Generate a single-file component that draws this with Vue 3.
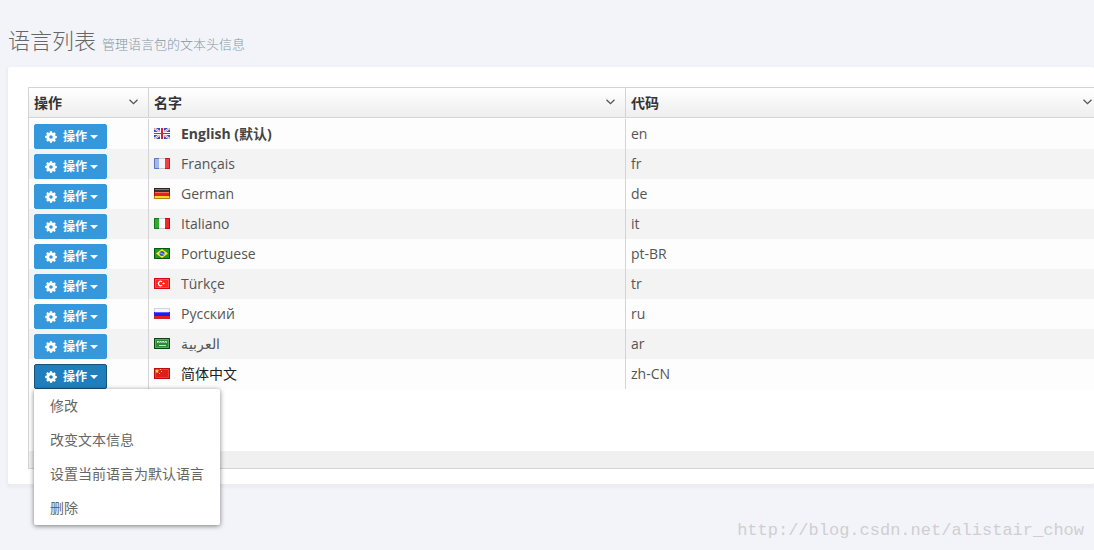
<script setup>
import { ref } from 'vue'

const columns = ['操作', '名字', '代码']
const languages = [
  { flag: 'gb', name: 'English', code: 'en', isDefault: true },
  { flag: 'fr', name: 'Français', code: 'fr' },
  { flag: 'de', name: 'German', code: 'de' },
  { flag: 'it', name: 'Italiano', code: 'it' },
  { flag: 'br', name: 'Portuguese', code: 'pt-BR' },
  { flag: 'tr', name: 'Türkçe', code: 'tr' },
  { flag: 'ru', name: 'Русский', code: 'ru' },
  { flag: 'sa', name: 'العربية', code: 'ar' },
  { flag: 'cn', name: '简体中文', code: 'zh-CN', dark: true },
]
const actions = ['修改', '改变文本信息', '设置当前语言为默认语言', '删除']
const openCode = ref('zh-CN')
function toggle(code) {
  openCode.value = openCode.value === code ? '' : code
}
</script>

<template>
  <main class="page">
    <header class="page-head">
      <h1>语言列表</h1>
      <small>管理语言包的文本头信息</small>
    </header>

    <section class="card">
      <div class="grid">
        <table>
          <thead>
            <tr>
              <th v-for="(c, i) in columns" :key="c" :class="{ narrow: i === 0 }" scope="col">
                <div class="th-inner">
                  <span>{{ c }}</span>
                  <button class="col-menu" type="button" :aria-label="c">
                    <svg width="9" height="6" viewBox="0 0 9 6"><path d="M.5.8 4.500 4.600 8.500.8" fill="none" stroke="#555" stroke-width="1.300" /></svg>
                  </button>
                </div>
              </th>
            </tr>
          </thead>
          <tbody>
            <tr v-for="l in languages" :key="l.code">
              <td class="action-cell">
                <button class="btn" :class="{ open: openCode === l.code }" type="button" :aria-expanded="openCode === l.code" @click="toggle(l.code)">
                  <svg class="gear" width="12" height="12" viewBox="0 0 12 12">
                    <path fill="#fff" fill-rule="evenodd" d="M5 .3h2l.3 1.400.9.4L9.400 1.300l1.400 1.400-.8 1.200.4.9 1.400.3v2l-1.400.3-.4.9.8 1.200-1.400 1.400-1.200-.8-.9.4L7 11.700H5l-.3-1.400-.9-.4-1.200.8L1.200 9.300l.8-1.200-.4-.9L.200 6.900v-2l1.400-.3.4-.9-.8-1.200 1.400-1.400 1.200.8.9-.4zM6 4.200a1.800 1.800 0 1 0 0 3.600 1.800 1.800 0 0 0 0-3.600z" />
                  </svg>
                  <span>操作</span>
                  <i class="caret"></i>
                </button>
                <ul v-if="openCode === l.code" class="menu">
                  <li v-for="a in actions" :key="a"><a href="#" @click.prevent>{{ a }}</a></li>
                </ul>
              </td>
              <td>
                <div class="name" :class="{ strong: l.isDefault, dark: l.dark }">
                  <svg class="flag" width="16" height="11" viewBox="0 0 16 11" aria-hidden="true">
                    <g v-if="l.flag === 'gb'">
                      <path fill="#2f4fc0" d="M0 0h16v11H0z" />
                      <path stroke="#fff" stroke-width="2" d="m0 0 16 11M16 0 0 11" />
                      <path stroke="#e8687c" stroke-width=".8" d="m0 0 16 11M16 0 0 11" />
                      <path fill="#fff" d="M6 0h4v11H6zM0 4h16v3H0z" />
                      <path fill="#d8203c" d="M7 0h2v11H7zM0 5h16v1H0z" />
                    </g>
                    <g v-else-if="l.flag === 'fr'">
                      <path fill="#f4f4f6" d="M0 0h16v11H0z" /><path fill="#a3b8ea" d="M0 0h5v11H0z" /><path fill="#f04040" d="M11 0h5v11h-5z" />
                      <path fill="none" stroke="#5878c4" d="M5 .5H.5v10H5" /><path fill="none" stroke="#c41c1c" d="M11 .5h4.500v10H11" /><path stroke="#c8c8d0" d="M5 .5h6m-6 10h6" />
                    </g>
                    <g v-else-if="l.flag === 'de'">
                      <path fill="#333" d="M0 0h16v4H0z" /><path fill="#e52020" d="M0 4h16v4H0z" /><path fill="#ffd52e" d="M0 8h16v3H0z" />
                      <path stroke="#777" d="M1 1.500h14" /><path stroke="#f57060" d="M1 4.500h14" /><path fill="none" stroke="#400" stroke-opacity=".4" d="M.5.5h15v10H.5z" />
                    </g>
                    <g v-else-if="l.flag === 'it'">
                      <path fill="#fff" d="M0 0h16v11H0z" /><path fill="#35a835" d="M0 0h5v11H0z" /><path fill="#ee2a2a" d="M11 0h5v11h-5z" />
                      <path fill="none" stroke="#087a16" d="M5 .5H.5v10H5" /><path fill="none" stroke="#c80808" d="M11 .5h4.500v10H11" /><path stroke="#ccc" d="M5 .5h6m-6 10h6" />
                    </g>
                    <g v-else-if="l.flag === 'br'">
                      <path fill="#269426" d="M0 0h16v11H0z" /><path fill="none" stroke="#065a0c" d="M.5.5h15v10H.5z" />
                      <path fill="#ffe930" d="m8 1 6 4.500L8 10 2 5.500z" /><circle cx="8" cy="5.500" r="2.500" fill="#2a55bd" /><path stroke="#bcd0f4" stroke-width=".8" d="M5.800 4.700 10 6.500" />
                    </g>
                    <g v-else-if="l.flag === 'tr'">
                      <path fill="#f22" d="M0 0h16v11H0z" /><path fill="none" stroke="#d40808" d="M.5.5h15v10H.5z" /><path fill="none" stroke="#ff5050" d="M1.500 1.500h13v8h-13z" />
                      <path fill="none" stroke="#fff" stroke-width="1.300" d="M8 3.800A2.200 2.200 0 1 0 8 7.200" /><path fill="#fff" d="m9.500 4 .5 1 1.500.5-1.500.5-.5 1-.5-1-1-.5 1-.5z" />
                    </g>
                    <g v-else-if="l.flag === 'ru'">
                      <path fill="#f5f5fa" d="M0 0h16v4H0z" /><path fill="#1c1cf0" d="M0 4h16v4H0z" /><path fill="#ee1818" d="M0 8h16v3H0z" />
                      <path stroke="#5c5cff" d="M1 4.500h14" /><path fill="none" stroke="#448" stroke-opacity=".2" d="M.5.5h15v10H.5z" />
                    </g>
                    <g v-else-if="l.flag === 'sa'">
                      <path fill="#2c8c36" d="M0 0h16v11H0z" /><path fill="none" stroke="#08430c" d="M.5.5h15v10H.5z" /><path fill="none" stroke="#5fa966" d="M1.500 1.500h13v8h-13z" />
                      <path stroke="#cfe6d0" d="M3 3.500h10" stroke-dasharray="2 .6" /><path stroke="#a9d0ac" d="M3 4.500h10" stroke-dasharray="1.300 .5" /><path stroke="#d9ecda" stroke-width=".9" d="M5 7.500h7" />
                    </g>
                    <g v-else>
                      <path fill="#e01c1c" d="M0 0h16v11H0z" /><path fill="none" stroke="#b80c0c" d="M.5.5h15v10H.5z" /><path fill="none" stroke="#e84038" d="M1.500 1.500h13v8h-13z" />
                      <path fill="#ffdf40" d="m3 1 .6 1.300L5 2.500 4 3.500l.3 1.500L3 4.200 1.700 5 2 3.500l-1-1 1.400-.2zM6 1h1v1H6zM7 3h1v1H7zM5 5h1v1H5z" />
                    </g>
                  </svg>
                  <span>{{ l.name }}<template v-if="l.isDefault"> (默认)</template></span>
                </div>
              </td>
              <td>{{ l.code }}</td>
            </tr>
          </tbody>
        </table>
        <div class="grid-foot"></div>
      </div>
    </section>

    <footer class="mark">http://blog.csdn.net/alistair_chow</footer>
  </main>
</template>

<style>
body {
  background: #f3f4f9;
}
</style>

<style scoped>
.page {
  box-sizing: border-box;
  min-height: 100vh;
  padding: 24px 0 0 8px;
  overflow: hidden;
  font-family: "Open Sans", "Noto Sans CJK SC", sans-serif;
  font-size: 14px;
  color: #555;
}
.page-head {
  display: flex;
  align-items: baseline;
  gap: 6px;
  height: 43px;
  line-height: 32px;
}
h1 {
  margin: 0;
  font-size: 22px;
  font-weight: 300;
  color: #666;
}
small {
  font-size: 13px;
  font-weight: 300;
  color: #85979f;
}
.card {
  padding: 20px 0 15px 20px;
  background: #fff;
  border-radius: 2px;
  box-shadow: 0 2px 3px 2px rgba(0, 0, 0, 0.03);
}
.grid {
  margin-right: -9px;
  border: 1px solid #d4d4d4;
  border-right: 0;
}
table {
  width: 100%;
  table-layout: fixed;
  border-collapse: separate;
  border-spacing: 0;
}
th,
td {
  box-sizing: border-box;
  height: 30px;
  padding: 0 5px;
  border-right: 1px solid #d4d4d4;
  text-align: left;
  vertical-align: middle;
}
th {
  border-bottom: 1px solid #d4d4d4;
  background: linear-gradient(#fff, #eee);
  font-weight: 700;
  color: #333;
}
th.narrow {
  width: 120px;
}
.th-inner {
  display: flex;
  align-items: center;
  justify-content: space-between;
  line-height: 28px;
}
.col-menu {
  display: flex;
  padding: 4px 5px 6px;
  border: 0;
  background: none;
}
tbody::before {
  content: "";
  display: table-row;
  height: 1px;
}
tbody tr {
  background: #fdfdfd;
}
tbody tr:nth-child(even) {
  background: #f3f3f3;
}
td {
  line-height: 20px;
}
.action-cell {
  position: relative;
  padding: 5px 5px 0;
}
.btn {
  display: flex;
  align-items: center;
  box-sizing: border-box;
  width: 73px;
  height: 25px;
  padding: 0 10px;
  border: 1px solid #3598dc;
  border-radius: 2px;
  background: #3598dc;
  color: #fff;
  font: 700 12px/18px "Open Sans", "Noto Sans CJK SC", sans-serif;
}
.btn.open {
  border-color: #15527c;
  background: #217ebd;
}
.gear {
  flex: none;
  margin-right: 6px;
}
.btn span {
  flex: none;
}
.caret {
  flex: none;
  margin-left: 3px;
  border: 4px solid transparent;
  border-top-color: #fff;
  border-bottom: 0;
}
.menu {
  position: absolute;
  z-index: 2;
  top: 100%;
  left: 5px;
  margin: 0;
  padding: 0;
  list-style: none;
  background: #fff;
  border-radius: 2px;
  box-shadow: 0 1px 5px rgba(0, 0, 0, 0.5);
}
.menu a {
  display: block;
  padding: 0 16px;
  line-height: 34px;
  color: #666;
  text-decoration: none;
  white-space: nowrap;
}
.name {
  display: flex;
  align-items: center;
  gap: 11px;
}
.flag {
  flex: none;
  margin-bottom: 2px;
}
.strong {
  font-weight: 700;
  color: #444;
}
.dark {
  color: #222;
}
.grid-foot {
  height: 17px;
  margin-top: 62px;
  background: #f0f0f0;
}
.mark {
  padding: 35px 10px 0 0;
  font: 17px/24px "Liberation Mono", monospace;
  color: #cfcfd1;
  text-align: right;
}
</style>
